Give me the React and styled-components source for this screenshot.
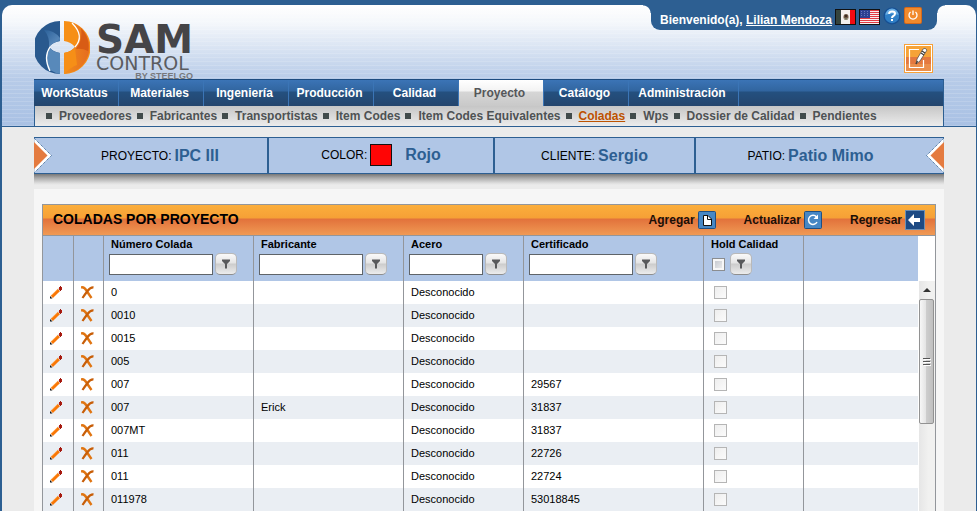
import React from "react";
import styled, { createGlobalStyle, css } from "styled-components";

const blue = "#2d5f92";
const paleBlue = "#b0c6e6";
const line = "#93969b";

const GlobalStyle = createGlobalStyle`
  *, *::before, *::after { box-sizing: border-box; }
  body {
    margin: 0;
    background: ${blue};
    font-family: "Liberation Sans", Arial, sans-serif;
    font-size: 11px;
    color: #000;
  }
  button, input { font: inherit; margin: 0; }
`;

const Page = styled.div`
  min-height: 100vh;
  padding: 5px 1px 0 2px;
  display: flex;
  flex-direction: column;
`;

const Header = styled.header`
  position: relative;
  border-radius: 10px 10px 0 0;
  border-bottom: 1px solid ${blue};
  padding: 0 32px;
  background:
    repeating-linear-gradient(to bottom, rgba(255, 255, 255, 0.14) 0 1px, transparent 1px 4px),
    linear-gradient(to bottom, #ffffff 0, #f4f7fb 18px, #b7cbe8 74px, #a9c1e4 100%);
`;

const Brand = styled.div`
  display: flex;
  align-items: flex-start;
  height: 74px;
  padding: 15px 0 0 1px;
  gap: 6px;
`;

const Wordmark = styled.div`
  display: flex;
  flex-direction: column;
  align-items: stretch;
  font-family: "DejaVu Sans", sans-serif;
  color: #454447;
  padding-top: 4px;
`;

const BrandName = styled.div`
  font-size: 39px;
  font-weight: bold;
  line-height: 32px;
`;

const BrandSub = styled.div`
  font-size: 19px;
  line-height: 15px;
  color: #5b5c60;
`;

const BrandBy = styled.div`
  font: bold 9px/10px "Liberation Sans", Arial, sans-serif;
  text-align: right;
  color: #77787b;
`;

const UserTab = styled.div`
  position: absolute;
  top: 0;
  right: 39px;
  height: 25px;
  display: flex;
  align-items: center;
  padding: 0 15px 0 9px;
  background: ${blue};
  border-radius: 0 0 9px 9px;
  color: #fff;
  font-size: 12px;
  font-weight: bold;
  white-space: nowrap;

  &::before, &::after {
    content: "";
    position: absolute;
    top: 0;
    width: 8px;
    height: 8px;
  }
  &::before { left: -8px; background: radial-gradient(circle at 0 100%, transparent 7px, ${blue} 8px); }
  &::after { right: -8px; background: radial-gradient(circle at 100% 100%, transparent 7px, ${blue} 8px); }
`;

const Welcome = styled.span`
  padding: 5px 3px 0 0;
  a { color: #fff; }
`;

const IconRow = styled.div`
  align-self: flex-start;
  display: flex;
  align-items: flex-end;
  gap: 3px;
  padding-top: 2px;
`;

const IconButton = styled.button`
  display: flex;
  padding: 0;
  border: 0;
  background: none;
  cursor: pointer;
`;

const EditSlot = styled.div`
  position: absolute;
  top: 39px;
  right: 43px;
`;

const MainMenu = styled.nav`
  display: flex;
  height: 27px;
  border-top: 1px solid #1d4c80;
  border-right: 1px solid ${blue};
  background: linear-gradient(to bottom, #3b74b6 0, #31659f 11px, #24507f 12px, #24456d 100%);
`;

const MainItem = styled.a`
  width: ${(p) => (p.$wide ? "110px" : "85px")};
  padding-right: 3px;
  border-right: 1px solid #3b75b6;
  text-align: center;
  font-size: 12px;
  font-weight: bold;
  line-height: 26px;
  text-decoration: none;
  color: #fff;
  ${(p) =>
    p.$active &&
    css`
      color: #55575a;
      background: linear-gradient(to bottom, #fff 0, #f3f3f3 11px, #d6d6d6 12px, #c9c9c9 100%);
    `}
`;

const SubMenu = styled.ul`
  display: flex;
  gap: 5px;
  margin: 0;
  padding: 0 11px;
  height: 20px;
  border-left: 1px solid ${blue};
  border-right: 1px solid ${blue};
  list-style: none;
  background: linear-gradient(to bottom, #c6c6c6, #ececec);
`;

const SubItem = styled.li`
  display: flex;
  align-items: center;
  gap: 7px;
  white-space: nowrap;
  font-size: 12px;
  font-weight: bold;
  &::before {
    content: "";
    width: 6px;
    height: 6px;
    background: #414b4b;
  }
  a {
    color: ${(p) => (p.$active ? "#bd5200" : "#4e5254")};
    text-decoration: ${(p) => (p.$active ? "underline" : "none")};
  }
`;

const Body = styled.div`
  flex: 1;
  display: flex;
  flex-direction: column;
  padding: 10px 32px 0;
  background: #ebebeb;
`;

const InfoBar = styled.section`
  position: relative;
  display: flex;
  height: 37px;
  border-top: 1px solid ${blue};
  border-bottom: 1px solid ${blue};
  background: ${paleBlue};
`;

const Shade = styled.div`
  height: 15px;
  background: linear-gradient(to bottom, #777 0, #a9a9a9 4px, #ddd 9px, #ebebeb 11px);
`;

const InfoCell = styled.div`
  flex: ${(p) => p.$size} 1 ${(p) => p.$size}px;
  display: flex;
  align-items: center;
  justify-content: center;
  gap: 3px;
  font-size: 12px;
  white-space: nowrap;
  padding: ${(p) => p.$pad || "0"};
  & + & { border-left: 2px solid ${blue}; }
  strong { font-size: 16px; color: ${blue}; }
`;

const Swatch = styled.span`
  width: 22px;
  height: 22px;
  margin-right: 10px;
  border: 1px solid #111;
  background: #ff0505;
`;

const Arrow = styled.svg`
  position: absolute;
  top: 0;
  ${(p) => p.$side}: 0;
`;

const Panel = styled.main`
  flex: 1;
  padding: 15px 8px 0;
  background: #f6f6f6;
`;

const Grid = styled.section`
  border: 1px solid ${line};
  border-bottom: 0;
  background: #fff;
`;

const TitleBar = styled.div`
  display: flex;
  align-items: center;
  height: 31px;
  padding: 0 10px;
  border-bottom: 1px solid ${line};
  background: linear-gradient(to bottom, #fbae3b 0, #f6a036 13px, #e2723b 14px, #f09a54 100%);
`;

const Title = styled.h1`
  flex: 1;
  margin: 0;
  font-size: 14px;
  line-height: 28px;
  padding-bottom: 2px;
`;

const Actions = styled.div`
  display: flex;
  gap: 28px;
`;

const Action = styled.button`
  display: flex;
  align-items: center;
  gap: 3px;
  padding: 0;
  border: 0;
  background: none;
  font-size: 12px;
  font-weight: bold;
  color: #1b0f06;
  cursor: pointer;
`;

const Scroller = styled.div`
  display: flex;
`;

const Table = styled.table`
  flex: 1;
  width: 100%;
  table-layout: fixed;
  border-collapse: separate;
  border-spacing: 0;
  th, td { border-right: 1px solid ${line}; padding: 0; text-align: left; }
  th:last-child, td:last-child { border-right: 0; }
`;

const Col = styled.col`
  width: ${(p) => (p.$w ? `${p.$w}px` : "auto")};
`;

const HeadCell = styled.th`
  height: 45px;
  vertical-align: top;
  background: ${paleBlue};
  && { padding-left: 5px; }
`;

const HeadLabel = styled.div`
  padding: 2px 2px 0;
  height: 17px;
  line-height: 13px;
  white-space: nowrap;
`;

const Filter = styled.div`
  display: flex;
  align-items: center;
  gap: 2px;
`;

const FilterInput = styled.input`
  width: ${(p) => p.$w}px;
  height: 21px;
  padding: 1px 3px;
  border: 1px solid #5f6468;
  border-radius: 0;
  background: #fff;
`;

const FilterButton = styled.button`
  display: flex;
  align-items: center;
  justify-content: center;
  width: 22px;
  height: 22px;
  padding: 0;
  border: 1px solid #b9b9b9;
  border-bottom-color: #8e8e8e;
  border-radius: 5px;
  background: linear-gradient(to bottom, #fafafa 0, #e4e4e4 45%, #cccccc 50%, #ececec 100%);
  cursor: pointer;
`;

const Check = styled.input`
  appearance: none;
  display: block;
  width: 13px;
  height: 13px;
  border: 1px solid #b5b5b5;
  background: linear-gradient(135deg, #eeeeee, #fbfbfb);
`;

const HeadCheck = styled(Check)`
  margin: 0 3px;
  border-color: #8b8d90;
  box-shadow: inset 0 0 0 2px #f7f7f7;
  background: linear-gradient(135deg, #bfc3ca, #f2f2f2);
`;

const Row = styled.tr`
  background: #fff;
  &:nth-child(even) { background: #eaeef3; }
`;

const Cell = styled.td`
  height: 23px;
  font-size: 11px;
  && {
    padding-left: ${(p) => p.$pad || 7}px;
    padding-bottom: 1px;
  }
`;

const ScrollBar = styled.div`
  width: 17px;
  display: flex;
  flex-direction: column;
  padding: 45px 0 0 1px;
  background: #fff;
`;

const Track = styled.div`
  flex: 1;
  display: flex;
  flex-direction: column;
  background: linear-gradient(to right, #e6e6e6, #f1f1f0 60%);
`;

const ArrowUp = styled.button`
  height: 18px;
  display: flex;
  align-items: center;
  justify-content: center;
  padding: 0;
  border: 0;
  background: none;
`;

const Thumb = styled.div`
  height: 125px;
  width: 15px;
  display: flex;
  align-items: center;
  justify-content: center;
  border: 1px solid #929292;
  border-radius: 2px;
  background: linear-gradient(to right, #f7f7f7 0, #e4e4e4 45%, #cdcdcd 50%, #c0c0c0 100%);
`;

const Logo = () => (
  <svg width="55" height="55" viewBox="0 0 55 55" aria-hidden="true">
    <defs>
      <linearGradient id="lgBlue" x1="0" y1="0" x2="1" y2="1">
        <stop offset="0" stopColor="#2b619a" />
        <stop offset="0.7" stopColor="#5585b7" />
        <stop offset="1" stopColor="#2d639c" />
      </linearGradient>
      <linearGradient id="lgOrange" x1="0" y1="0" x2="1" y2="0">
        <stop offset="0" stopColor="#f28e1b" />
        <stop offset="1" stopColor="#e56c20" />
      </linearGradient>
    </defs>
    <path d="M25 1A26.500 26.500 0 0 0 25 54V33Q18 32 14 27Q18 22 25 21Z" fill="#29598e" />
    <path d="M9 10Q19 10 25 18V21Q18 22 14 27Q15 17 9 10Z" fill="url(#lgBlue)" />
    <path d="M25 33Q18 32 15 28Q9 37 15 50Q20 53 25 54Z" fill="#5889ba" />
    <path d="M15 27Q8 37 15 51" fill="none" stroke="#fff" strokeWidth="1.300" />
    <path d="M29 1A26.500 26.500 0 0 1 29 54V33Q36 32 40 27Q36 22 29 21Z" fill="#f68f17" />
    <path d="M38 3A26.500 26.500 0 0 1 40 51Q34 53 29 54V33Q36 32 40 27Q48 16 38 3Z" fill="url(#lgOrange)" />
    <path d="M46 8A26.500 26.500 0 0 1 53 31Q47 28 41 29Q48 20 46 8Z" fill="#d85c15" />
    <path d="M29 33Q36 32 40 28L42 45Q36 47 29 54Z" fill="#f68f17" />
    <path d="M37 3Q50 16 40 27" fill="none" stroke="#fff" strokeWidth="1.300" />
  </svg>
);

const FlagMexico = () => (
  <svg width="21" height="16" viewBox="0 0 21 16" aria-hidden="true">
    <rect width="21" height="16" fill="#111" />
    <rect x="1" y="1" width="5" height="14" fill="#35433c" />
    <rect x="6" y="1" width="9" height="14" fill="#f4f1ee" />
    <rect x="15" y="1" width="5" height="14" fill="#f30b12" />
    <ellipse cx="11" cy="8" rx="2.500" ry="3" fill="#6b5440" />
    <path d="M9 9Q11 12 13 9" stroke="#97a58c" fill="none" />
    <circle cx="11" cy="7" r="1" fill="#2a211c" />
  </svg>
);

const FlagUsa = () => (
  <svg width="21" height="16" viewBox="0 0 21 16" aria-hidden="true">
    <rect width="21" height="16" fill="#111" />
    <rect x="1" y="1" width="19" height="14" fill="#f8eeee" />
    {[1, 3, 5, 7, 9, 11, 13].map((y) => (
      <rect key={y} x="1" y={y} width="19" height="1" fill="#e23b43" />
    ))}
    <rect x="1" y="1" width="10" height="8" fill="#2b3f92" />
    {[2, 4, 6].map((y) => (
      <path key={y} d={`M2 ${y + 0.5}H10`} stroke="#6576bd" strokeDasharray="1 2" />
    ))}
  </svg>
);

const HelpIcon = () => (
  <svg width="18" height="18" viewBox="0 0 18 18" aria-hidden="true">
    <circle cx="9" cy="9" r="8.500" fill="#164f93" />
    <circle cx="9" cy="9" r="7.200" fill="#2f7fc6" />
    <path d="M2.500 8A6.500 6.500 0 0 1 15.500 8Q9 5 2.500 8Z" fill="#69ade3" />
    <path d="M6 6.800Q6.300 4.500 9.200 4.500Q12 4.500 12 6.800Q12 8.200 10.300 9Q9 9.700 9 11" stroke="#fff" strokeWidth="2" fill="none" />
    <rect x="8" y="12" width="2" height="2" fill="#fff" />
  </svg>
);

const PowerIcon = () => (
  <svg width="18" height="18" viewBox="0 0 18 18" aria-hidden="true">
    <rect width="18" height="17" rx="2" fill="#d4691c" />
    <rect x="1" y="1" width="16" height="15" rx="1" fill="#f18a2c" />
    <path d="M6.500 5A4 4 0 1 0 11.500 5M9 3.500V8" stroke="#fff" strokeWidth="1.300" fill="none" />
  </svg>
);

const EditIcon = () => (
  <svg width="29" height="29" viewBox="0 0 29 29" aria-hidden="true">
    <rect width="29" height="29" fill="#f7a139" />
    <rect x="1.500" y="1.500" width="26" height="26" fill="#f6a338" stroke="#fff" />
    <rect x="2" y="13" width="25" height="14" fill="#e4793f" />
    <rect x="2" y="20" width="25" height="7" fill="#eb8f4c" />
    <path d="M15 5.500H5.500V23.500H19.500V16" fill="none" stroke="#fff" strokeWidth="1.200" />
    <path d="M12 20L13 15L19 5Q21 3 23 6L16 17Z" fill="#fff" stroke="#5b5148" strokeWidth="0.800" />
    <path d="M18 7L21 9M17 9L20 11M12 20L13.500 17" stroke="#3f3a35" strokeWidth="1.200" />
  </svg>
);

const Tile = ({ size = 18, children }) => (
  <svg width={size} height={size} viewBox={`0 0 ${size} ${size}`} aria-hidden="true">
    <rect x="0.500" y="0.500" width={size - 1} height={size - 1} rx="1" fill="#4787c4" stroke="#1f4f83" />
    {children}
  </svg>
);

const AddIcon = () => (
  <Tile>
    <path d="M5.500 4.500H10L13.500 8V14.500H5.500Z" fill="#fff" stroke="#111" />
    <path d="M9.500 4.500V8.500H13.500" fill="none" stroke="#111" />
  </Tile>
);

const RefreshIcon = () => (
  <Tile>
    <path d="M13 11A4.500 4.500 0 1 1 12.500 6" fill="none" stroke="#fff" strokeWidth="1.500" />
    <path d="M14 3.500V8H9.500Z" fill="#fff" />
  </Tile>
);

const BackIcon = () => (
  <svg width="20" height="20" viewBox="0 0 20 20" aria-hidden="true">
    <rect x="0.500" y="0.500" width="19" height="19" fill="#1d4a83" stroke="#6b8fb4" />
    <path d="M3 10L9 4V8H15V12H9V16Z" fill="#fff" />
  </svg>
);

const FunnelIcon = () => (
  <svg width="10" height="10" viewBox="0 0 10 10" aria-hidden="true">
    <path d="M1 0.500H9V2L6 5V9.500H4V5L1 2Z" fill="#58595b" />
  </svg>
);

const PencilIcon = () => (
  <svg width="13" height="13" viewBox="0 0 13 13" aria-hidden="true">
    <path d="M1.800 10.800L9 3.800" stroke="#f97706" strokeWidth="3.200" />
    <path d="M1.500 9.500L7.800 3.300" stroke="#ffa64a" strokeWidth="0.800" />
    <path d="M8.200 2.500L10.300 4.600" stroke="#d5d0cc" strokeWidth="1.200" />
    <rect x="9" y="1" width="3" height="3" fill="#b41d10" />
    <rect x="10" y="0" width="1" height="5" fill="#9c1a12" />
    <path d="M0 12.500V10L2.500 12.500Z" fill="#111" />
  </svg>
);

const DeleteIcon = () => (
  <svg width="13" height="13" viewBox="0 0 13 13" aria-hidden="true">
    <path d="M0 1.500Q3 0.500 5.500 4.500T10.500 12" stroke="#e07512" strokeWidth="2.400" fill="none" />
    <path d="M12.500 1.300Q9.500 1 6.500 5T1.500 12" stroke="#c85e08" strokeWidth="2.200" fill="none" />
  </svg>
);

const mainItems = ["WorkStatus", "Materiales", "Ingeniería", "Producción", "Calidad", "Proyecto", "Catálogo", "Administración"];

const subItems = [
  "Proveedores", "Fabricantes", "Transportistas", "Item Codes", "Item Codes Equivalentes",
  "Coladas", "Wps", "Dossier de Calidad", "Pendientes",
];

const filters = [
  { label: "Número Colada", width: 104 },
  { label: "Fabricante", width: 104 },
  { label: "Acero", width: 74 },
  { label: "Certificado", width: 104 },
];

const rows = [
  ["0", "", ""],
  ["0010", "", ""],
  ["0015", "", ""],
  ["005", "", ""],
  ["007", "", "29567"],
  ["007", "Erick", "31837"],
  ["007MT", "", "31837"],
  ["011", "", "22726"],
  ["011", "", "22724"],
  ["011978", "", "53018845"],
];

export default function App() {
  return (
    <>
      <GlobalStyle />
      <Page>
        <Header>
          <Brand>
            <Logo />
            <Wordmark>
              <BrandName>SAM</BrandName>
              <BrandSub>CONTROL</BrandSub>
              <BrandBy>BY STEELGO</BrandBy>
            </Wordmark>
          </Brand>
          <UserTab>
            <Welcome>
              Bienvenido(a), <a href="#perfil">Lilian Mendoza</a>
            </Welcome>
            <IconRow>
              <IconButton aria-label="Español"><FlagMexico /></IconButton>
              <IconButton aria-label="English"><FlagUsa /></IconButton>
              <IconButton aria-label="Ayuda"><HelpIcon /></IconButton>
              <IconButton aria-label="Salir"><PowerIcon /></IconButton>
            </IconRow>
          </UserTab>
          <EditSlot>
            <IconButton aria-label="Editar"><EditIcon /></IconButton>
          </EditSlot>
          <MainMenu>
            {mainItems.map((t) => (
              <MainItem key={t} href="#menu" $active={t === "Proyecto"} $wide={t === "Administración"}>
                {t}
              </MainItem>
            ))}
          </MainMenu>
          <SubMenu>
            {subItems.map((t) => (
              <SubItem key={t} $active={t === "Coladas"}>
                <a href="#submenu">{t}</a>
              </SubItem>
            ))}
          </SubMenu>
        </Header>

        <Body>
          <InfoBar>
            <InfoCell $size={233} $pad="0 0 0 19px">PROYECTO: <strong>IPC III</strong></InfoCell>
            <InfoCell $size={226} $pad="0 0 2px">COLOR: <Swatch /><strong>Rojo</strong></InfoCell>
            <InfoCell $size={201}>CLIENTE: <strong>Sergio</strong></InfoCell>
            <InfoCell $size={250} $pad="0 19px 0 0">PATIO: <strong>Patio Mimo</strong></InfoCell>
            <Arrow $side="left" width="18" height="35" viewBox="0 0 18 35" aria-hidden="true">
              <path d="M0 0L17.500 17.500L0 35Z" fill="#fff" stroke={blue} strokeDasharray="1 1" />
              <path d="M0 4L13.500 17.500L0 31Z" fill="#e47b40" />
            </Arrow>
            <Arrow $side="right" width="18" height="35" viewBox="0 0 18 35" aria-hidden="true">
              <path d="M18 0L0.500 17.500L18 35Z" fill="#fff" stroke={blue} strokeDasharray="1 1" />
              <path d="M18 4L4.500 17.500L18 31Z" fill="#e47b40" />
            </Arrow>
          </InfoBar>
          <Shade />
          <Panel>
            <Grid>
              <TitleBar>
                <Title>COLADAS POR PROYECTO</Title>
                <Actions>
                  <Action>Agregar <AddIcon /></Action>
                  <Action>Actualizar <RefreshIcon /></Action>
                  <Action>Regresar <BackIcon /></Action>
                </Actions>
              </TitleBar>
              <Scroller>
                <Table>
                  <colgroup>
                    {[31, 30, 150, 150, 120, 180, 100, 0].map((w, i) => (
                      <Col key={i} $w={w} />
                    ))}
                  </colgroup>
                  <thead>
                    <tr>
                      <HeadCell />
                      <HeadCell />
                      {filters.map((f) => (
                        <HeadCell key={f.label}>
                          <HeadLabel>{f.label}</HeadLabel>
                          <Filter>
                            <FilterInput type="text" aria-label={f.label} $w={f.width} />
                            <FilterButton aria-label={`Filtrar ${f.label}`}><FunnelIcon /></FilterButton>
                          </Filter>
                        </HeadCell>
                      ))}
                      <HeadCell>
                        <HeadLabel>Hold Calidad</HeadLabel>
                        <Filter>
                          <HeadCheck type="checkbox" aria-label="Hold Calidad" />
                          <FilterButton aria-label="Filtrar Hold Calidad"><FunnelIcon /></FilterButton>
                        </Filter>
                      </HeadCell>
                      <HeadCell />
                    </tr>
                  </thead>
                  <tbody>
                    {rows.map(([num, fab, cert], i) => (
                      <Row key={i}>
                        <Cell><IconButton aria-label="Editar colada"><PencilIcon /></IconButton></Cell>
                        <Cell><IconButton aria-label="Borrar colada"><DeleteIcon /></IconButton></Cell>
                        <Cell>{num}</Cell>
                        <Cell>{fab}</Cell>
                        <Cell>Desconocido</Cell>
                        <Cell>{cert}</Cell>
                        <Cell $pad={10}><Check type="checkbox" disabled aria-label={`Hold ${num}`} /></Cell>
                        <Cell />
                      </Row>
                    ))}
                  </tbody>
                </Table>
                <ScrollBar>
                  <Track>
                    <ArrowUp aria-label="Subir">
                      <svg width="8" height="4" viewBox="0 0 8 4" aria-hidden="true">
                        <path d="M4 0L8 4H0Z" fill="#333" />
                      </svg>
                    </ArrowUp>
                    <Thumb>
                      <svg width="8" height="9" viewBox="0 0 8 9" aria-hidden="true">
                        <path d="M0 1.500H7M0 4.500H7M0 7.500H7" stroke="#555" />
                        <path d="M1 2.500H8M1 5.500H8M1 8.500H8" stroke="#fff" />
                      </svg>
                    </Thumb>
                  </Track>
                </ScrollBar>
              </Scroller>
            </Grid>
          </Panel>
        </Body>
      </Page>
    </>
  );
}
